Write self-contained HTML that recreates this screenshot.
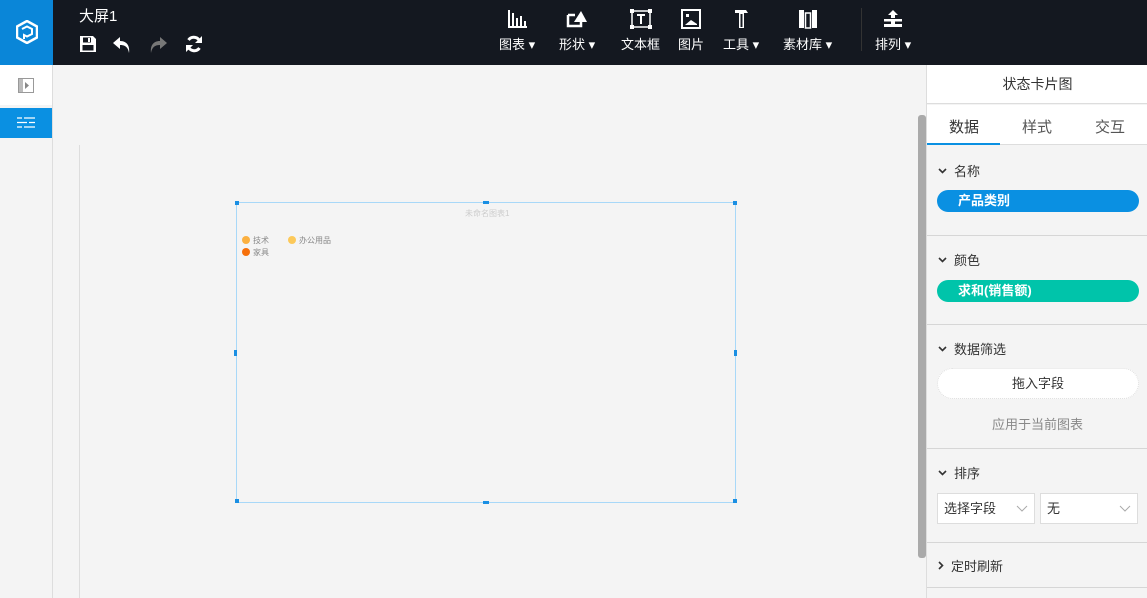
<!DOCTYPE html>
<html><head><meta charset="utf-8"><style>
*{box-sizing:border-box;margin:0;padding:0}
html,body{width:1147px;height:598px;overflow:hidden}
body{position:relative;background:#f4f4f4;font-family:"Liberation Sans","Noto Sans CJK SC",sans-serif;font-size:13px;color:#333}
.abs{position:absolute}
.top{left:0;top:0;width:1147px;height:65px;background:#141820}
.logo{left:0;top:0;width:53px;height:65px;background:#0a86d8}
.tb{color:#fff;font-size:13px;text-align:center;line-height:15px}
.tb svg{display:block;margin:0 auto 8px}
.rp{left:926px;top:65px;width:221px;height:533px;background:#f4f4f4;border-left:1px solid #ddd}
.sec{position:absolute;left:0;width:221px;border-top:1px solid #d6d6d6}
.h{position:absolute;left:11px;font-size:13px;color:#333;display:flex;align-items:center;gap:7px}
.pill{position:absolute;left:10px;width:202px;height:22px;border-radius:11px;color:#fff;font-weight:bold;font-size:13px;line-height:22px;padding-left:21px}
.hd{position:absolute;width:6px;height:6px;background:#1a8fe3}
.dd{position:absolute;right:6px;top:11px}
</style></head><body>
<div class="abs top"></div>
<div class="abs logo"><svg class="abs" style="left:16px;top:20px" width="22" height="24" viewBox="0 0 22 24"><path d="M11 1 L21 6.5 V17.5 L11 23 L1 17.5 V6.5 Z" fill="none" stroke="#fff" stroke-width="2.5"/><path d="M6 9 L11 6.5 L16 9 V14 L11 16.5 L8 15 V19" fill="none" stroke="#fff" stroke-width="2"/></svg></div>
<div class="abs" style="left:79px;top:5px;color:#fff;font-size:15px">大屏1</div>
<svg class="abs" style="left:79px;top:35px" width="18" height="18" viewBox="0 0 18 18"><path d="M1 1H14L17 4V17H1Z" fill="#fff"/><rect x="4" y="2.5" width="8" height="5" fill="#141820"/><rect x="9" y="3" width="2" height="4" fill="#fff"/><rect x="3.5" y="10" width="11" height="5.5" fill="#141820"/></svg>
<svg class="abs" style="left:112px;top:36px" width="20" height="18" viewBox="0 0 20 18"><path d="M8 1 L1 7 L8 13 V9 C13 9 16 11 17 17 C18 10 15 5 8 5Z" fill="#fff"/></svg>
<svg class="abs" style="left:148px;top:36px" width="20" height="18" viewBox="0 0 20 18"><path d="M12 1 L19 7 L12 13 V9 C7 9 4 11 3 17 C2 10 5 5 12 5Z" fill="#777"/></svg>
<svg class="abs" style="left:185px;top:35px" width="18" height="18" viewBox="0 0 18 18"><path d="M15 7 A6.5 6.5 0 0 0 3.5 5 M3 11 A6.5 6.5 0 0 0 14.5 13" fill="none" stroke="#fff" stroke-width="3"/><path d="M17 1V8H10Z M1 17V10H8Z" fill="#fff"/></svg>
<div class="abs tb" style="left:499px;top:9px">
<svg width="20" height="20" viewBox="0 0 20 20" fill="#fff"><rect x="1" y="1" width="2" height="18"/><rect x="1" y="17" width="19" height="2"/><rect x="5" y="4" width="2" height="13"/><rect x="9" y="9" width="2" height="8"/><rect x="13" y="7" width="2" height="10"/><rect x="17" y="12" width="2" height="5"/></svg>图表 ▾</div>
<div class="abs tb" style="left:559px;top:9px">
<svg width="22" height="20" viewBox="0 0 22 20"><path d="M2 6H9 M2 6V17H15V12" fill="none" stroke="#fff" stroke-width="2.5"/><path d="M8 13 L15 2 L21 13Z" fill="#fff"/></svg>形状 ▾</div>
<div class="abs tb" style="left:621px;top:9px">
<svg width="22" height="20" viewBox="0 0 22 20"><rect x="2" y="2" width="18" height="16" fill="none" stroke="#fff" stroke-width="1.5"/><rect x="0" y="0" width="4" height="4" fill="#fff"/><rect x="18" y="0" width="4" height="4" fill="#fff"/><rect x="0" y="16" width="4" height="4" fill="#fff"/><rect x="18" y="16" width="4" height="4" fill="#fff"/><path d="M7 6H15M11 6V15" stroke="#fff" stroke-width="2"/></svg>文本框</div>
<div class="abs tb" style="left:678px;top:9px">
<svg width="20" height="20" viewBox="0 0 20 20"><rect x="1" y="1" width="18" height="18" fill="none" stroke="#fff" stroke-width="2"/><rect x="5" y="5" width="3" height="3" fill="#fff"/><path d="M4 16 L10 11 L16 15 V16Z" fill="#fff"/></svg>图片</div>
<div class="abs tb" style="left:723px;top:9px">
<svg width="20" height="20" viewBox="0 0 20 20" fill="#fff"><path d="M4 1H15L17 4H13V19H8V4H4Z"/><rect x="9.5" y="5" width="2" height="13" fill="#141820"/></svg>工具 ▾</div>
<div class="abs tb" style="left:783px;top:9px">
<svg width="20" height="20" viewBox="0 0 20 20"><rect x="1" y="1" width="5" height="18" fill="#fff"/><rect x="7.5" y="4" width="5" height="15" fill="none" stroke="#fff" stroke-width="1.5"/><rect x="14" y="1" width="5" height="18" fill="#fff"/></svg>素材库 ▾</div>
<div class="abs" style="left:861px;top:8px;width:1px;height:43px;background:#333"></div>
<div class="abs tb" style="left:875px;top:9px">
<svg width="22" height="20" viewBox="0 0 22 20" fill="#fff"><path d="M11 1 L16 6H13V9H9V6H6Z"/><rect x="2" y="10" width="18" height="2.5"/><rect x="9" y="12" width="4" height="3"/><rect x="2" y="15" width="18" height="3"/></svg>排列 ▾</div>
<div class="abs" style="left:0;top:65px;width:53px;height:533px;background:#f4f4f4;border-right:1px solid #ddd"></div>
<div class="abs" style="left:0;top:65px;width:52px;height:40px;background:#fff"></div>
<svg class="abs" style="left:18px;top:78px" width="16" height="15" viewBox="0 0 16 15"><rect x="0.5" y="0.5" width="15" height="14" fill="none" stroke="#999"/><rect x="1" y="1" width="4" height="13" fill="#bbb"/><path d="M7 4 L11 7.5 L7 11Z" fill="#888"/></svg>
<div class="abs" style="left:0;top:108px;width:52px;height:30px;background:#0a90e2"></div>
<svg class="abs" style="left:17px;top:116px" width="18" height="13" viewBox="0 0 18 13" stroke="#fff" stroke-width="1.2"><path d="M0 2H5M7 2H18M0 6.5H10M12 6.5H18M0 11H5M7 11H18"/></svg>
<div class="abs" style="left:79px;top:145px;width:1px;height:453px;background:#ddd"></div>
<div class="abs" style="left:236px;top:202px;width:500px;height:301px;border:1px solid #a8d8f8"></div>
<div class="hd" style="left:235px;top:201px;width:4px;height:4px"></div><div class="hd" style="left:733px;top:201px;width:4px;height:4px"></div>
<div class="hd" style="left:235px;top:499px;width:4px;height:4px"></div><div class="hd" style="left:733px;top:499px;width:4px;height:4px"></div>
<div class="hd" style="left:483px;top:201px;height:3px"></div><div class="hd" style="left:483px;top:501px;height:3px"></div>
<div class="hd" style="left:234px;top:350px;width:3px"></div><div class="hd" style="left:734px;top:350px;width:3px"></div>
<div class="abs" style="left:465px;top:208px;font-size:8px;color:#ccc">未命名图表1</div>
<div class="abs" style="left:242px;top:236px;width:8px;height:8px;border-radius:50%;background:#fbb040"></div>
<div class="abs" style="left:253px;top:235px;font-size:8px;color:#888">技术</div>
<div class="abs" style="left:288px;top:236px;width:8px;height:8px;border-radius:50%;background:#fcc95a"></div>
<div class="abs" style="left:299px;top:235px;font-size:8px;color:#888">办公用品</div>
<div class="abs" style="left:242px;top:248px;width:8px;height:8px;border-radius:50%;background:#f6700a"></div>
<div class="abs" style="left:253px;top:247px;font-size:8px;color:#888">家具</div>
<div class="abs" style="left:918px;top:115px;width:8px;height:443px;background:#aaa;border-radius:3px"></div>
<div class="abs rp">
<div class="abs" style="left:0;top:0;width:221px;height:39px;background:#fff;border-bottom:1px solid #ddd;text-align:center;line-height:39px;font-size:14px">状态卡片图</div>
<div class="abs" style="left:0;top:40px;width:221px;height:40px;background:#fff;border-bottom:1px solid #ddd;font-size:15px">
<span class="abs" style="left:22px;top:11px">数据</span><span class="abs" style="left:95px;top:11px;color:#555">样式</span><span class="abs" style="left:168px;top:11px;color:#555">交互</span>
<div class="abs" style="left:0;top:38px;width:73px;height:2px;background:#0a90e2"></div></div>
<div class="sec" style="top:80px;height:90px;border-top:none"><div class="h" style="top:16px"><svg width="9" height="6" viewBox="0 0 9 6"><path d="M1 1L4.5 4.5L8 1" fill="none" stroke="#333" stroke-width="1.6"/></svg>名称</div><div class="pill" style="top:45px;background:#0a90e2">产品类别</div></div>
<div class="sec" style="top:170px;height:89px"><div class="h" style="top:14px"><svg width="9" height="6" viewBox="0 0 9 6"><path d="M1 1L4.5 4.5L8 1" fill="none" stroke="#333" stroke-width="1.6"/></svg>颜色</div><div class="pill" style="top:44px;background:#00c4aa">求和(销售额)</div></div>
<div class="sec" style="top:259px;height:124px"><div class="h" style="top:14px"><svg width="9" height="6" viewBox="0 0 9 6"><path d="M1 1L4.5 4.5L8 1" fill="none" stroke="#333" stroke-width="1.6"/></svg>数据筛选</div>
<div class="abs" style="left:10px;top:43px;width:202px;height:31px;border-radius:16px;background:#fff;border:1px dotted #ddd;text-align:center;line-height:29px">拖入字段</div>
<div class="abs" style="left:0;top:89px;width:221px;text-align:center;color:#888">应用于当前图表</div></div>
<div class="sec" style="top:383px;height:94px"><div class="h" style="top:14px"><svg width="9" height="6" viewBox="0 0 9 6"><path d="M1 1L4.5 4.5L8 1" fill="none" stroke="#333" stroke-width="1.6"/></svg>排序</div>
<div class="abs" style="left:10px;top:44px;width:98px;height:31px;background:#fff;border:1px solid #ddd;line-height:29px;padding-left:6px">选择字段<svg class="dd" width="12" height="7" viewBox="0 0 12 7"><path d="M1 1L6 6L11 1" fill="none" stroke="#aaa"/></svg></div>
<div class="abs" style="left:113px;top:44px;width:98px;height:31px;background:#fff;border:1px solid #ddd;line-height:29px;padding-left:6px">无<svg class="dd" width="12" height="7" viewBox="0 0 12 7"><path d="M1 1L6 6L11 1" fill="none" stroke="#aaa"/></svg></div></div>
<div class="sec" style="top:477px;height:45px"><div class="h" style="top:13px"><svg width="6" height="9" viewBox="0 0 6 9"><path d="M1 1L4.5 4.5L1 8" fill="none" stroke="#333" stroke-width="1.6"/></svg>定时刷新</div></div>
<div class="sec" style="top:522px;height:20px"></div>
</div>
</body></html>
